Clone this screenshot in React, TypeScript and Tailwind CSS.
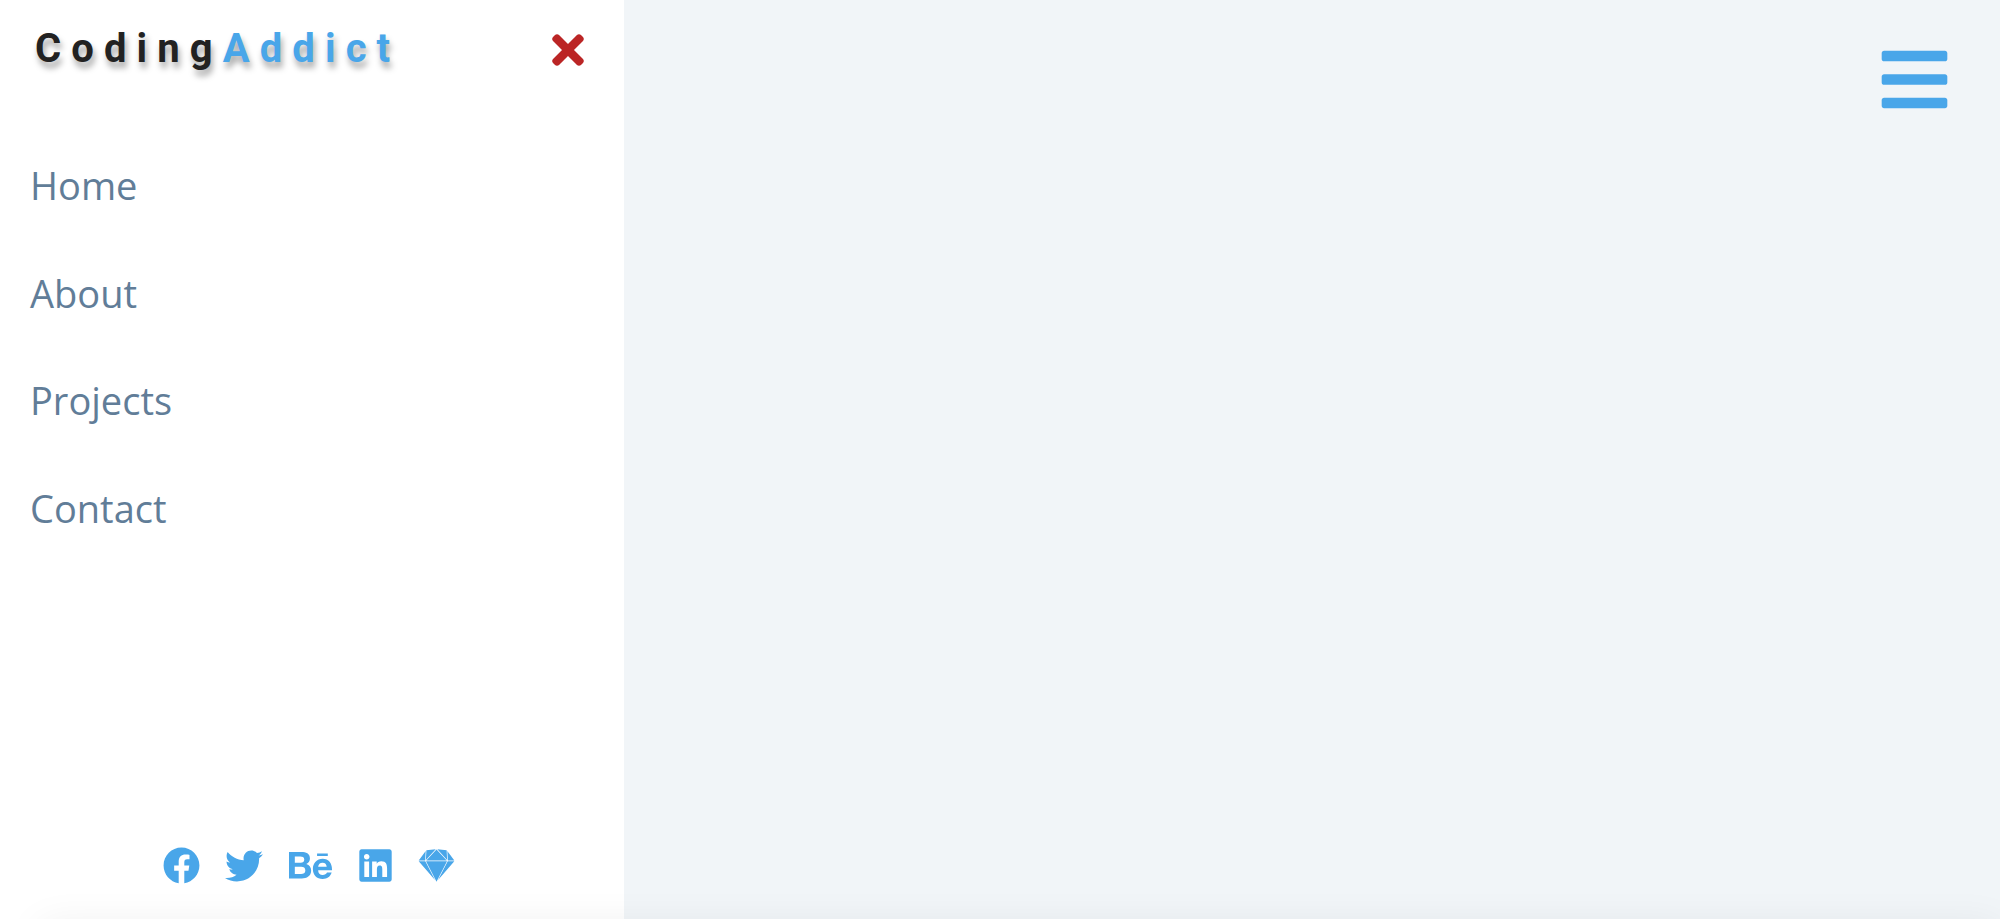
import { FaBars, FaTimes, FaFacebook, FaTwitter, FaBehance, FaLinkedin, FaSketch } from "react-icons/fa";

const links = ["Home", "About", "Projects", "Contact"];

export default function App() {
  return (
    <div className="relative flex h-[919px] w-[2000px] overflow-hidden bg-[#f1f5f8]">
      <aside className="flex h-full w-[624px] shrink-0 flex-col bg-white">
        <header className="flex h-[98px] items-start justify-between pl-[35px] pr-[33px] pt-[25px]">
          <h1 className="font-['Roboto',sans-serif] text-[40px] font-bold leading-[48px] tracking-[10.1px] text-[#222222] [text-shadow:2px_6px_6px_rgba(0,0,0,0.35)]">
            Coding<span className="text-[#49a6e9]">Addict</span>
          </h1>
          <button className="mt-[2px] text-[#bb2525]">
            <FaTimes size={46} />
          </button>
        </header>
        <nav className="mt-[62px] flex flex-col gap-[56.5px] pl-[30px]">
          {links.map((l) => (
            <a key={l} className="font-['Open_Sans',sans-serif] text-[38px] leading-[51px] text-[#617d98]">
              {l}
            </a>
          ))}
        </nav>
        <div className="flex-1" />
        <div className="flex items-center justify-center gap-[25px] pb-[32px] pr-[6px] text-[#49a6e9]">
          <FaFacebook size={37} />
          <FaTwitter size={38} />
          <FaBehance className="ml-[1px]" size={43} />
          <FaLinkedin size={37} />
          <FaSketch className="-ml-[1px]" size={37} />
        </div>
      </aside>
      <main className="flex flex-1 items-start justify-end pr-[48px] pt-[42px] text-[#49a6e9]">
        <FaBars size={75} />
      </main>
      <div className="pointer-events-none absolute left-[40px] right-0 top-[925px] h-10 shadow-[0_0_40px_rgba(0,0,0,0.07)]" />
    </div>
  );
}
